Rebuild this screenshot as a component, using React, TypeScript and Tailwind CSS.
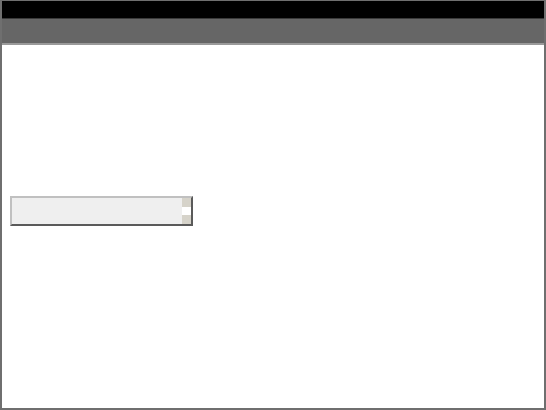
import React from "react";

export default function App() {
  return (
    <div className="w-[546px] h-[410px] bg-white flex flex-col border-x-2 border-b-2 border-t border-[#6f6f6f] overflow-hidden" style={{ fontFamily: '"Liberation Sans", sans-serif' }}>
      <div className="h-[18px] bg-black border-b border-[#3a3a3a] shrink-0" />
      <div className="h-[26px] bg-[#666666] border-b-2 border-[#9a9a9a] shrink-0" />
      <div className="flex-1 relative">
        <div className="pt-[151px] pl-[8px]">
          <div className="w-[183px] h-[30px] flex bg-[#efefef] border-t-2 border-l-2 border-[#c0c0c0] border-b-2 border-r-2 border-b-[#5a5a5a] border-r-[#5a5a5a]">
            <div className="flex-1" />
            <div className="w-[9px] flex flex-col justify-between">
              <div className="h-[9px] bg-[#d6d3ca]" />
              <div className="flex-1 bg-white" />
              <div className="h-[9px] bg-[#d6d3ca]" />
            </div>
          </div>
        </div>
      </div>
    </div>
  );
}
